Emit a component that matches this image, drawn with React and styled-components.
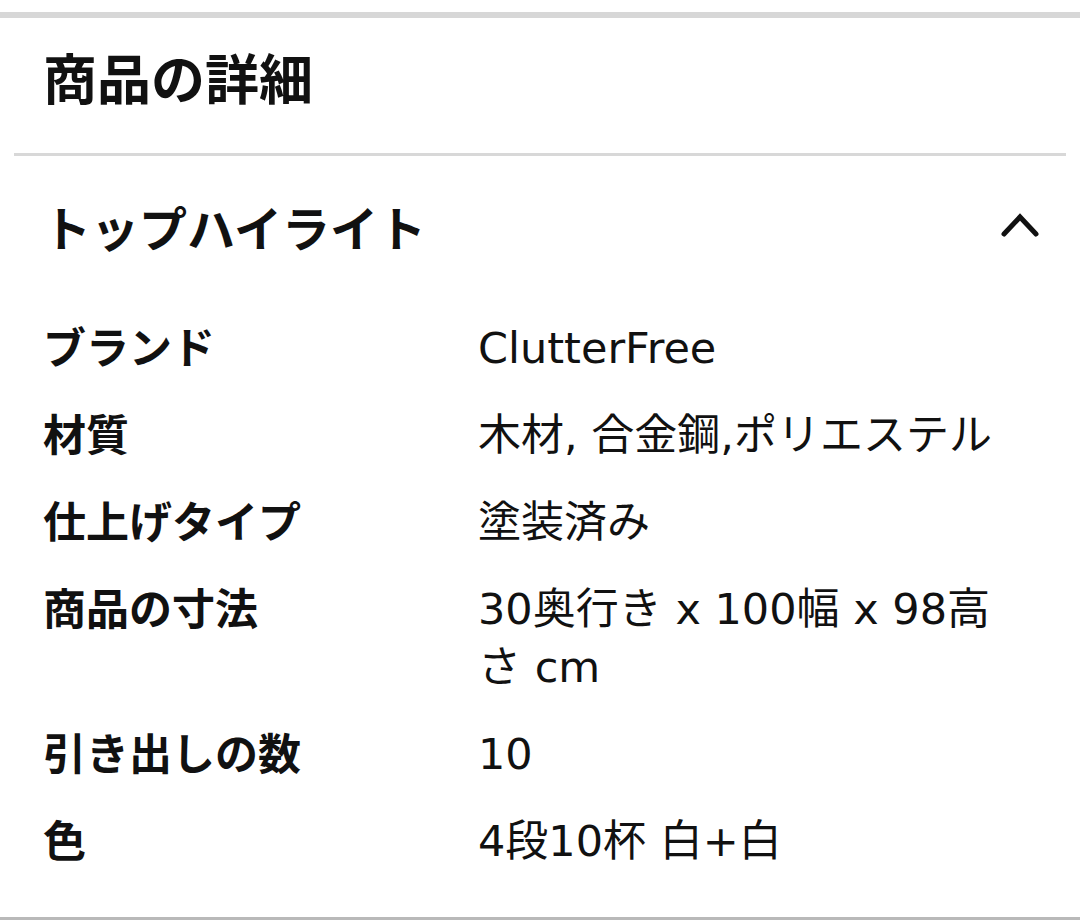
import React from "react";
import styled, { createGlobalStyle } from "styled-components";

const GlobalStyle = createGlobalStyle`
  html, body {
    margin: 0;
    padding: 0;
    background: #ffffff;
  }
  body {
    font-family: "Noto Sans CJK JP", "Noto Sans", sans-serif;
    color: #111111;
  }
`;

const Page = styled.div`
  width: 1080px;
  min-height: 920px;
  display: flex;
  flex-direction: column;
  background: #fff;
`;

const TopBand = styled.div`
  margin-top: 12px;
  height: 6px;
  background: #d7d7d7;
`;

const Title = styled.h1`
  margin: 0;
  padding: 24px 43px 41px;
  font-size: 54px;
  line-height: 70px;
  font-weight: 700;
  letter-spacing: 0;
`;

const Divider = styled.hr`
  margin: 0 14px;
  border: 0;
  height: 3px;
  background: #d8d8d8;
`;

const SectionHeader = styled.div`
  display: flex;
  align-items: center;
  justify-content: space-between;
  padding: 40px 40px 0 43px;
`;

const SectionTitle = styled.h2`
  margin: 0;
  font-size: 48px;
  line-height: 60px;
  font-weight: 700;
`;

const ToggleButton = styled.button`
  border: 0;
  background: transparent;
  padding: 0;
  display: flex;
  align-items: center;
  cursor: pointer;
`;

const Specs = styled.dl`
  margin: 60px 0 0;
  padding: 0 56px 0 43px;
  display: grid;
  grid-template-columns: 435px 1fr;
  row-gap: 29px;
  font-size: 43px;
  line-height: 58px;
`;

const Label = styled.dt`
  font-weight: 700;
`;

const Value = styled.dd`
  margin: 3px 0 -3px;
  font-family: "DejaVu Sans", "Noto Sans CJK JP", sans-serif;
  font-weight: 400;
`;

const Spacer = styled.div`
  flex: 1;
`;

const BottomLine = styled.div`
  height: 3px;
  background: #b9b9b9;
`;

const specs = [
  ["ブランド", "ClutterFree"],
  ["材質", "木材, 合金鋼,ポリエステル"],
  ["仕上げタイプ", "塗装済み"],
  ["商品の寸法", "30奥行き x 100幅 x 98高さ cm"],
  ["引き出しの数", "10"],
  ["色", "4段10杯 白+白"],
];

const ChevronUp = () => (
  <svg width="40" height="26" viewBox="0 0 40 26" fill="none">
    <polyline
      points="4,21 20,4 36,21"
      stroke="#111"
      strokeWidth="5"
      strokeLinecap="round"
      strokeLinejoin="miter"
    />
  </svg>
);

export default function App() {
  return (
    <Page>
      <GlobalStyle />
      <TopBand />
      <Title>商品の詳細</Title>
      <Divider />
      <SectionHeader>
        <SectionTitle>トップハイライト</SectionTitle>
        <ToggleButton aria-label="閉じる">
          <ChevronUp />
        </ToggleButton>
      </SectionHeader>
      <Specs>
        {specs.map(([k, v]) => (
          <React.Fragment key={k}>
            <Label>{k}</Label>
            <Value>{v}</Value>
          </React.Fragment>
        ))}
      </Specs>
      <Spacer />
      <BottomLine />
    </Page>
  );
}
